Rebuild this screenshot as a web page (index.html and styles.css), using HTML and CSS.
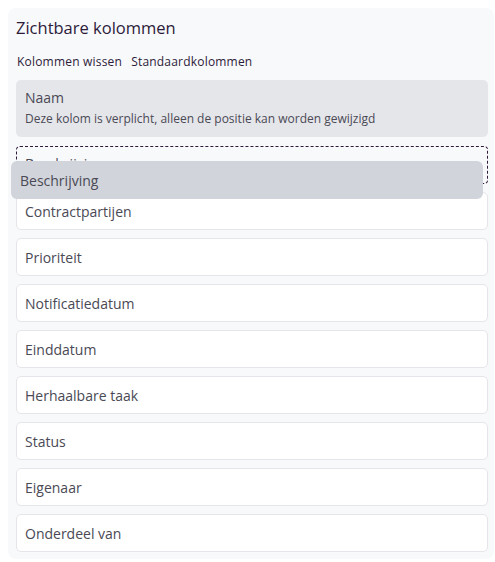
FILE: index.html
```html
<!DOCTYPE html>
<html lang="nl">
<head>
<meta charset="utf-8">
<title>Zichtbare kolommen</title>
<link rel="stylesheet" href="styles.css">
</head>
<body>
<div class="panel">
  <h2 class="title">Zichtbare kolommen</h2>
  <div class="links">
    <span class="link">Kolommen wissen</span>
    <span class="link">Standaardkolommen</span>
  </div>
  <div class="fixed">
    <div class="fixed-name">Naam</div>
    <div class="fixed-desc">Deze kolom is verplicht, alleen de positie kan worden gewijzigd</div>
  </div>
  <div class="list">
    <div class="placeholder"><span class="placeholder-text">Beschrijving</span></div>
    <div class="item">Contractpartijen</div>
    <div class="item">Prioriteit</div>
    <div class="item">Notificatiedatum</div>
    <div class="item">Einddatum</div>
    <div class="item">Herhaalbare taak</div>
    <div class="item">Status</div>
    <div class="item">Eigenaar</div>
    <div class="item">Onderdeel van</div>
  </div>
  <div class="dragging">Beschrijving</div>
</div>
</body>
</html>
```

FILE: styles.css
```css
html, body {
  background: #ffffff;
}
body {
  margin: 8px 1px 3px 8px;
  font-family: "Open Sans", "Noto Sans", sans-serif;
  color: #4a4955;
}
.panel {
  position: relative;
  width: 486px;
  box-sizing: border-box;
  background: #f8f9fa;
  border-radius: 8px;
  padding: 8px 6px 7px 8px;
}
.title {
  margin: 0;
  font-size: 16.5px;
  line-height: 24px;
  font-weight: 500;
  color: #2d1b3a;
}
.links {
  display: flex;
  gap: 9px;
  margin-top: 14px;
  padding-left: 1px;
  font-size: 12px;
  letter-spacing: 0.2px;
  line-height: 16px;
  color: #2d1b3a;
}
.fixed {
  margin-top: 10px;
  background: #e5e6ea;
  border-radius: 5px;
  padding: 8px 9px 9px;
}
.fixed-name {
  font-size: 14px;
  line-height: 20px;
}
.fixed-desc {
  margin-top: 2px;
  font-size: 12px;
  line-height: 18px;
}
.list {
  margin-top: 9px;
  display: flex;
  flex-direction: column;
  gap: 8px;
}
.placeholder {
  height: 38px;
  box-sizing: border-box;
  border: 1px dashed #2d1b3a;
  border-radius: 4px;
  padding: 0 8px 4px;
  display: flex;
  align-items: center;
  font-size: 14px;
}
.item {
  height: 38px;
  box-sizing: border-box;
  background: #ffffff;
  border: 1px solid #e4e6ea;
  border-radius: 5px;
  padding: 0 8px;
  display: flex;
  align-items: center;
  font-size: 14px;
}
.dragging {
  position: absolute;
  left: 3px;
  top: 153px;
  width: 472px;
  height: 38px;
  box-sizing: border-box;
  background: #d1d5db;
  border-radius: 6px;
  padding: 0 9px;
  display: flex;
  align-items: center;
  font-size: 14px;
}
```
